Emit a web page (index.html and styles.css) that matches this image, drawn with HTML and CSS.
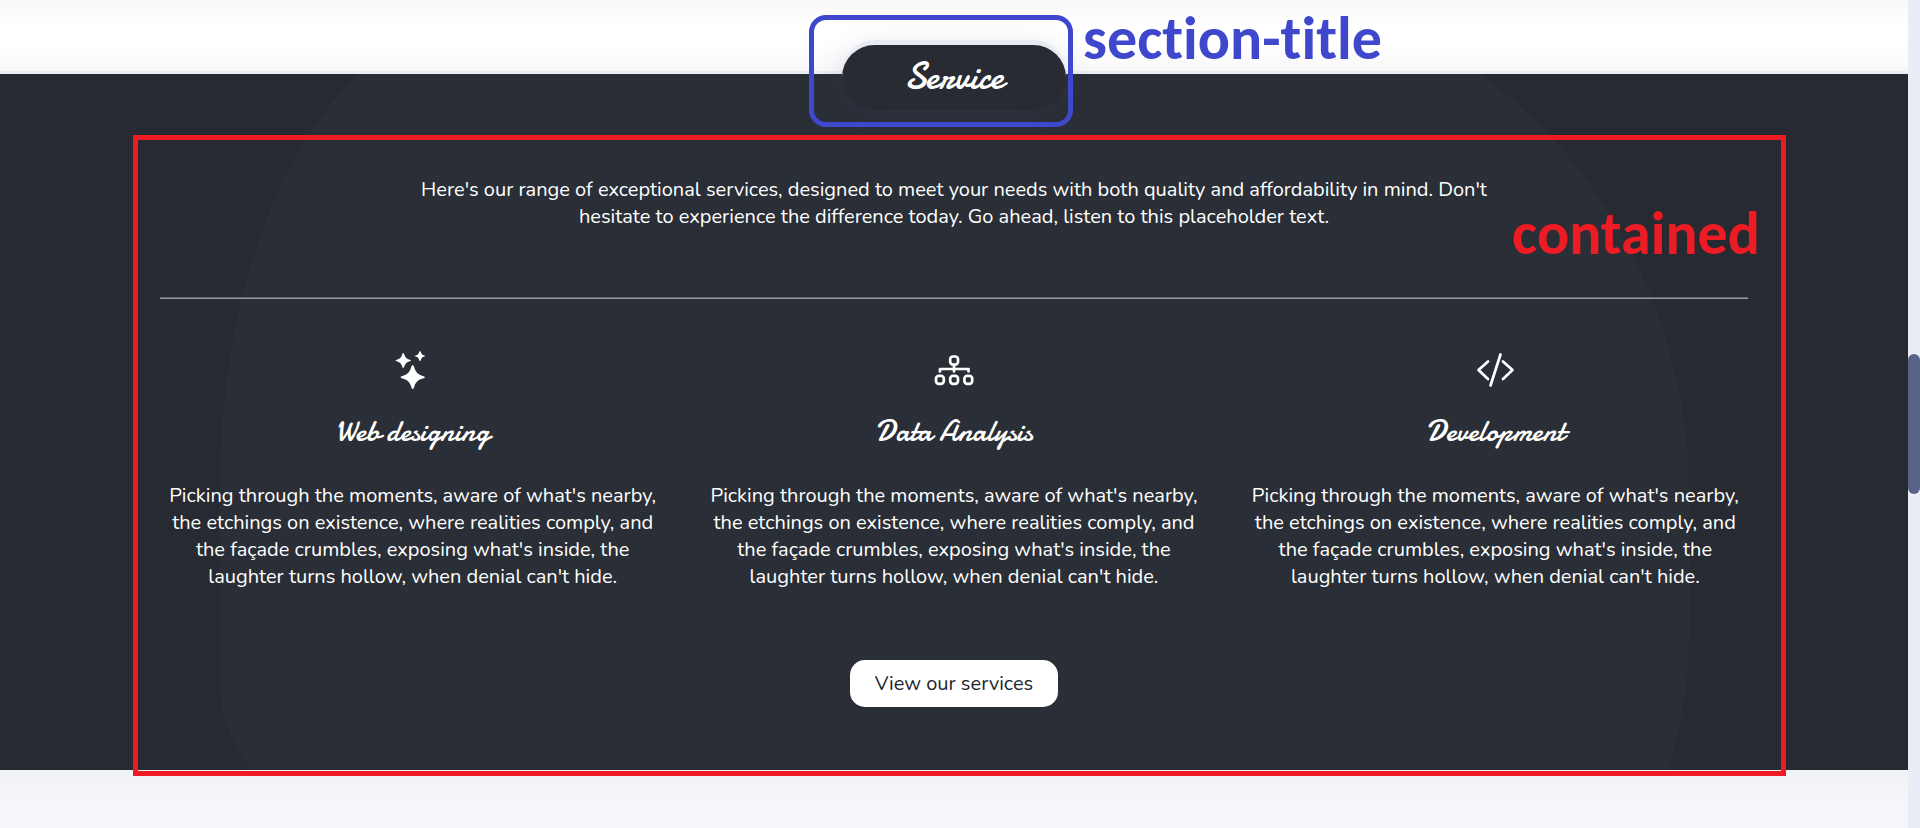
FILE: index.html
```html
<!DOCTYPE html>
<html lang="en">
<head>
<meta charset="utf-8">
<title>Service</title>
<link rel="stylesheet" href="styles.css">
</head>
<body>
<div class="page">
  <div class="previous"></div>
  <section class="service">
    <svg class="blob" viewBox="0 0 1908 696" preserveAspectRatio="none" aria-hidden="true">
      <path d="M358 0C272 82 220 240 220 410V616Q222 656 252 696H1667Q1689 630 1689 566V416C1689 250 1606 90 1480 0Z"/>
    </svg>
    <div class="section-title">
      <h2>Service</h2>
      <div class="title-frame"></div>
      <span class="note title-note">section-title</span>
    </div>
    <div class="contained">
      <div class="contained-frame"></div>
      <span class="note contained-note">contained</span>
      <p class="intro">Here's our range of exceptional services, designed to meet your needs with both quality and affordability in mind. Don't hesitate to experience the difference today. Go ahead, listen to this placeholder text.</p>
      <hr>
      <div class="cards">
        <article class="card">
          <svg class="icon" viewBox="0 0 48 48" fill="#fff" aria-hidden="true">
            <path d="M14 7Q15 7 15.500 9Q16.500 12.500 20 13.500Q22 14 22 14.500Q22 15 20 15.500Q16.500 16.500 15.500 20Q15 22 14 22Q13.500 22 13 20Q12 16.500 8.500 15.500Q6.500 15 6.500 14.500Q6.500 14 8.500 13.500Q12 12.500 13 9Q13.500 7 14 7Z"/>
            <path d="M31 5Q31.700 5 32 6.500Q32.500 8.800 34.500 9.300Q36 9.600 36 10Q36 10.500 34.500 10.800Q32.500 11.300 32 13.500Q31.700 15 31 15Q30.300 15 30 13.500Q29.500 11.300 27.500 10.800Q26 10.500 26 10Q26 9.600 27.500 9.300Q29.500 8.800 30 6.500Q30.300 5 31 5Z"/>
            <path d="M23.700 19Q24.800 19 25.300 21.500Q27 28 33 29.800Q36 30.500 36 31.300Q36 32 33 32.800Q27 34.500 25.300 40.500Q24.800 43 23.700 43Q22.600 43 22.100 40.500Q20.400 34.500 14.300 32.800Q11.400 32 11.400 31.300Q11.400 30.500 14.300 29.800Q20.400 28 22.100 21.500Q22.600 19 23.700 19Z"/>
          </svg>
          <h3>Web designing</h3>
          <p>Picking through the moments, aware of what's nearby, the etchings on existence, where realities comply, and the façade crumbles, exposing what's inside, the laughter turns hollow, when denial can't hide.</p>
        </article>
        <article class="card">
          <svg class="icon" viewBox="0 0 48 48" fill="none" stroke="#fff" stroke-width="2.700" stroke-linecap="round" stroke-linejoin="round" aria-hidden="true">
            <rect x="20.200" y="10.500" width="7.800" height="8" rx="2.800"/>
            <rect x="6" y="29.800" width="7.800" height="8" rx="2.800"/>
            <rect x="20.200" y="29.800" width="7.800" height="8" rx="2.800"/>
            <rect x="34.400" y="29.800" width="7.800" height="8" rx="2.800"/>
            <path d="M24 19V25.500M10 25.500V23H38.500V25.500"/>
          </svg>
          <h3>Data Analysis</h3>
          <p>Picking through the moments, aware of what's nearby, the etchings on existence, where realities comply, and the façade crumbles, exposing what's inside, the laughter turns hollow, when denial can't hide.</p>
        </article>
        <article class="card">
          <svg class="icon" viewBox="0 0 48 48" fill="none" stroke="#fff" stroke-width="2.700" stroke-linecap="round" stroke-linejoin="round" aria-hidden="true">
            <path d="M17 15.500L7.500 24L17 33M32 15.500L41.500 24L32 33M29.500 8.500L19.500 39.500"/>
          </svg>
          <h3>Development</h3>
          <p>Picking through the moments, aware of what's nearby, the etchings on existence, where realities comply, and the façade crumbles, exposing what's inside, the laughter turns hollow, when denial can't hide.</p>
        </article>
      </div>
      <button class="more" type="button">View our services</button>
    </div>
  </section>
  <div class="next"></div>
</div>
<div class="scrollbar"><div class="thumb"></div></div>
</body>
</html>
```
FILE: styles.css
```css
* { box-sizing: border-box; }

body {
  margin: 0;
  min-height: 100vh;
  display: flex;
  font-family: Nunito, Lato, "Open Sans", sans-serif;
  font-size: 20px;
  line-height: 27px;
  color: #fff;
  background: #f5f6fb;
}

h2, h3, p { margin: 0; }

.page {
  flex: 1;
  min-width: 0;
  display: flex;
  flex-direction: column;
}

.previous {
  height: 74px;
  border-bottom: 3px solid #ebedf2;
  background: linear-gradient(#f8f8f8, #fff 24px, #fff 44px, #f8f8f9);
}

.service {
  position: relative;
  padding-bottom: 63px;
  background: #272a31;
}

.blob {
  position: absolute;
  inset: 0;
  width: 100%;
  height: 100%;
  fill: #2a2e36;
}

.section-title {
  position: relative;
  width: 224px;
  margin: -29px auto 0;
}

.section-title h2 {
  padding: 16px 0;
  border-radius: 36px;
  background: #282b31;
  box-shadow: 0 -5px 0 #e9ebf4, 0 0 28px rgba(70, 80, 140, 0.14);
  font: 38px/33px Damion, cursive;
  text-align: center;
}

.title-frame {
  position: absolute;
  top: -30px;
  left: -33px;
  width: 264px;
  height: 112px;
  border: 5px solid #3f48cc;
  border-radius: 17px;
}

.note {
  position: absolute;
  font: bold 60px/64px Carlito, Lato, sans-serif;
  font-variant-ligatures: none;
  white-space: nowrap;
}

.title-note {
  top: -38px;
  left: 241px;
  color: #3f48cc;
}

.contained {
  position: relative;
  width: 84%;
  max-width: 1588px;
  margin: 0 auto;
  padding-top: 66px;
  display: flex;
  flex-direction: column;
  align-items: center;
}

.contained-frame {
  position: absolute;
  top: 25px;
  right: -38px;
  bottom: -69px;
  left: -27px;
  border: 5px solid #ed1c24;
}

.contained-note {
  top: 92px;
  right: -12px;
  color: #ed1c24;
}

.intro {
  max-width: 1100px;
  text-align: center;
}

hr {
  width: 100%;
  height: 2px;
  margin: 67px 0 47px;
  border: 0;
  border-top: 1px solid #646669;
  border-bottom: 1px solid #97999d;
}

.cards {
  width: 100%;
  display: grid;
  grid-template-columns: repeat(3, 1fr);
  gap: 36px;
}

.card {
  display: flex;
  flex-direction: column;
  align-items: center;
  text-align: center;
}

.icon {
  width: 48px;
  height: 48px;
}

.card h3 {
  margin: 14px 0 26px;
  font: 30px/48px Damion, cursive;
}

.more {
  margin-top: 70px;
  padding: 10px 25px;
  border: 0;
  border-radius: 15px;
  background: #fff;
  color: #23252c;
  font: inherit;
}

.next {
  flex: 1;
  background: linear-gradient(#f1f2f5, #f5f6fb 30px);
}

.scrollbar {
  width: 12px;
  display: grid;
  grid-template-rows: 354fr 140fr 334fr;
  background: #eaedf7;
}

.thumb {
  grid-row: 2;
  border-radius: 6px;
  background: #5a6285;
}
```
